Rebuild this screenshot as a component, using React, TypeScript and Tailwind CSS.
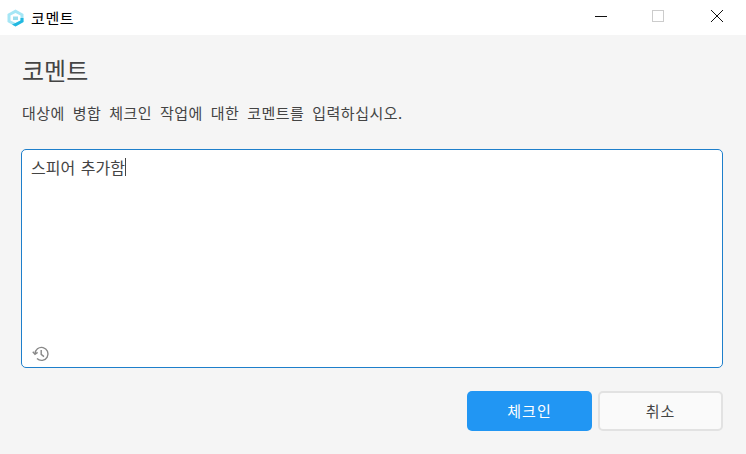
export default function App() {
  return (
    <div className="w-[746px] h-[454px] flex flex-col bg-[#f5f5f5] overflow-hidden text-[#444444] font-['Noto_Sans_CJK_KR',sans-serif]">
      <div className="h-[35px] bg-white flex items-center shrink-0">
        <div className="pl-[7px] pr-[7px] flex items-center">
          <svg width="17" height="18" viewBox="0 0 17 18">
            <path d="M8.5 0.5 L16.5 5 V13 L8.5 17.5 L0.5 13 V5 Z" fill="#a5e6f5" />
            <path d="M8.5 4 L13.5 6.5 V11.5 L8.5 14 L3.5 11.5 V6.5 Z" fill="#ffffff" />
            <path d="M16.5 9 V13 L8.5 17.5 L5 15.5 L8.5 14 L13.5 11.5 V9 Z" fill="#22b8e0" />
            <path d="M6 7.5 H11 V11 H6 Z" fill="#9adcec" />
          </svg>
        </div>
        <span className="text-[15px] leading-none text-black tracking-[0.6px]">코멘트</span>
        <div className="ml-auto flex items-center h-full pb-[3px]">
          <div className="w-[58px] h-full flex items-center justify-center">
            <svg width="14" height="14" viewBox="0 0 14 14"><path d="M1 7.5 H13" stroke="#111" strokeWidth="1" /></svg>
          </div>
          <div className="w-[58px] h-full flex items-center justify-center -translate-x-px">
            <svg width="14" height="14" viewBox="0 0 14 14"><rect x="1.5" y="1.5" width="11" height="11" fill="none" stroke="#cccccc" strokeWidth="1" /></svg>
          </div>
          <div className="w-[58px] h-full flex items-center justify-center">
            <svg width="14" height="14" viewBox="0 0 14 14"><path d="M1 1 L13 13 M13 1 L1 13" stroke="#111" strokeWidth="1" /></svg>
          </div>
        </div>
      </div>
      <div className="flex-1 flex flex-col pl-[21px] pr-[23px]">
        <h1 className="text-[24px] leading-[32px] mt-[19px] ml-px font-normal text-[#444444]">코멘트</h1>
        <p className="text-[15px] leading-[20px] mt-[17px] ml-px tracking-[0.5px] [word-spacing:4px]">대상에 병합 체크인 작업에 대한 코멘트를 입력하십시오.</p>
        <div className="relative mt-[26px] h-[219px] bg-white border border-[#1e7fcb] rounded-[5px] pl-[9px] pt-[6px]">
          <div className="flex items-center text-[16px] leading-[22px] [word-spacing:2px]">
            <span>스피어 추가함</span>
            <span className="w-px h-[18px] bg-[#444444]" />
          </div>
          <svg className="absolute left-[10px] bottom-[4px]" width="18" height="18" viewBox="0 0 18 18" fill="none" stroke="#888888" strokeWidth="1.4">
            <path d="M3 9 A6.5 6.5 0 1 1 5 13.6" />
            <path d="M0.8 6.8 L3 9.4 L5.6 7.4" />
            <path d="M9.2 5 V9.4 L12 11.6" />
          </svg>
        </div>
        <div className="mt-[23px] flex justify-end gap-[6px]">
          <button className="w-[125px] h-[40px] rounded-[5px] bg-[#2196f3] text-white text-[15px] tracking-[1px]">체크인</button>
          <button className="w-[125px] h-[40px] rounded-[5px] bg-[#fafafa] border-2 border-[#e2e2e2] text-[#444444] text-[15px] tracking-[1px]">취소</button>
        </div>
      </div>
    </div>
  );
}
